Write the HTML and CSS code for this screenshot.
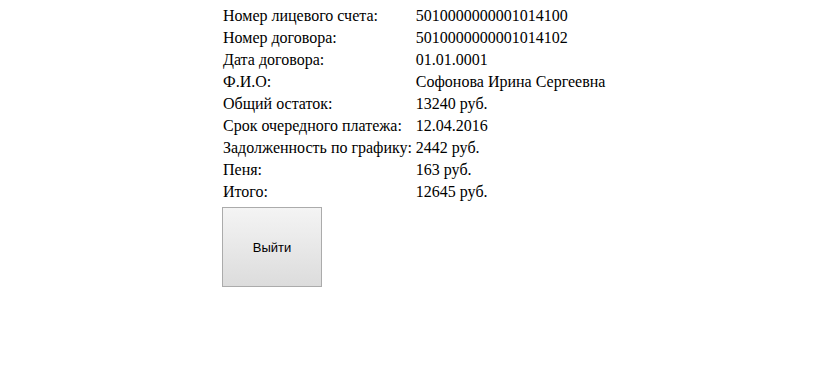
FILE: index.html
```html
<!DOCTYPE html>
<html>
<head>
<meta charset="utf-8">
<link rel="stylesheet" href="styles.css">
</head>
<body>
<div class="wrap">
  <table class="info">
    <tr><td>Номер лицевого счета:</td><td>5010000000001014100</td></tr>
    <tr><td>Номер договора:</td><td>5010000000001014102</td></tr>
    <tr><td>Дата договора:</td><td>01.01.0001</td></tr>
    <tr><td>Ф.И.О:</td><td>Софонова Ирина Сергеевна</td></tr>
    <tr><td>Общий остаток:</td><td>13240 руб.</td></tr>
    <tr><td>Срок очередного платежа:</td><td>12.04.2016</td></tr>
    <tr><td>Задолженность по графику:</td><td>2442 руб.</td></tr>
    <tr><td>Пеня:</td><td>163 руб.</td></tr>
    <tr><td>Итого:</td><td>12645 руб.</td></tr>
  </table>
  <button class="exit">Выйти</button>
</div>
</body>
</html>
```
FILE: styles.css
```css
html, body {
  margin: 0;
  padding: 0;
  background: #fff;
}
body {
  font-family: "Liberation Serif", "Times New Roman", serif;
  font-size: 16px;
  color: #000;
}
.wrap {
  width: fit-content;
  margin-left: 222px;
  padding-top: 5px;
}
.info {
  border-collapse: collapse;
}
.info td {
  padding: 2px 1px;
  line-height: 18px;
  white-space: nowrap;
  vertical-align: top;
}
.info td:first-child {
  padding-right: 3px;
}
.exit {
  display: block;
  margin-top: 4px;
  width: 100px;
  height: 80px;
  border: 1px solid #ababab;
  border-radius: 0;
  background: linear-gradient(#f4f4f4, #dcdcdc);
  font-family: "Liberation Sans", Arial, sans-serif;
  font-size: 13px;
  color: #000;
  padding: 0;
}
```
